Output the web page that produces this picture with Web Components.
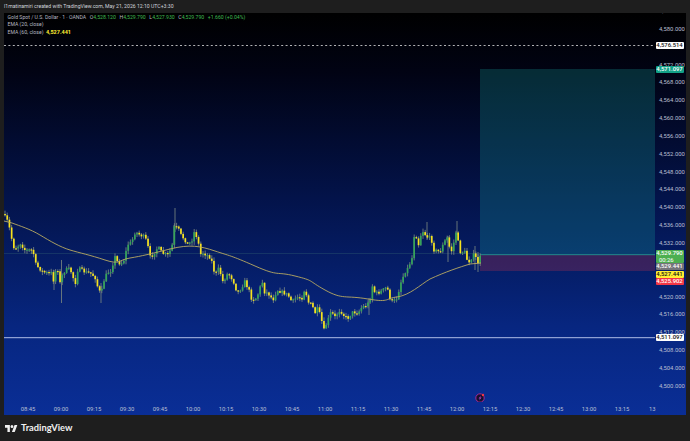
<!DOCTYPE html>
<html lang="en"><head><meta charset="utf-8"><title>TradingView snapshot</title>
<style>html,body{margin:0;padding:0;background:#1e1e1e}</style></head>
<body>
<tv-snapshot>
  <tv-title slot="title">l1matinamiri created with TradingView.com, May 21, 2026 12:10 UTC+3:30</tv-title>
  <tv-panel slot="panel">
    <tv-legend slot="legend"></tv-legend>
    <tv-plot slot="plot"></tv-plot>
    <tv-time-axis slot="time"></tv-time-axis>
    <tv-price-axis slot="price">
      <tv-tag y="42" bg="#ffffff" fg="#111">4,576.514</tv-tag>
      <tv-tag y="66" bg="#12a086" fg="#fff">4,571.097</tv-tag>
      <tv-tag y="250" h="13" bg="#4caf50" fg="#fff" sub="00:26">4,529.790</tv-tag>
      <tv-tag y="263" bg="#74747a" fg="#fff">4,529.441</tv-tag>
      <tv-tag y="270.5" bg="#ffee33" fg="#111">4,527.441</tv-tag>
      <tv-tag y="278" bg="#f23645" fg="#fff">4,525.902</tv-tag>
      <tv-tag y="334" bg="#ffffff" fg="#111">4,511.097</tv-tag>
    </tv-price-axis>
  </tv-panel>
  <tv-footer slot="footer">TradingView</tv-footer>
</tv-snapshot>
<script>
const FONT = '"Roboto","Liberation Sans",sans-serif';
function def(name, css, html, init){
  customElements.define(name, class extends HTMLElement{
    connectedCallback(){
      if(this.shadowRoot) return;
      const r=this.attachShadow({mode:'open'});
      r.innerHTML='<style>'+css+'</style>'+(typeof html==='function'?html(this):html);
      if(init) init(r,this);
    }
  });
}
def('tv-snapshot',`:host{display:grid;grid-template-rows:13px 402px 26px;width:690px;height:441px;background:#1e1e1e;overflow:hidden;font-family:${FONT}}`,
  '<slot name="title"></slot><slot name="panel"></slot><slot name="footer"></slot>');
def('tv-title',`:host{display:block;padding-left:4px;font:400 5.15px/12px ${FONT};color:#d1d4dc;white-space:nowrap}`,'<slot></slot>');
def('tv-panel',`:host{display:grid;grid-template-columns:651px 31px;grid-template-rows:389px 13px;margin-left:4px;width:682px;height:402px;position:relative;
  background:linear-gradient(180deg,#000 0%,#010314 15%,#03134a 46%,#072680 78%,#0a2e96 100%);overflow:hidden}
  ::slotted([slot=plot]){grid-column:1;grid-row:1}
  ::slotted([slot=time]){grid-column:1;grid-row:2}
  ::slotted([slot=price]){grid-column:2;grid-row:1/3}`,
  '<slot name="plot"></slot><slot name="time"></slot><slot name="price"></slot><slot name="legend"></slot>');
def('tv-legend',`:host{position:absolute;left:3.5px;top:1.2px;display:block;font:400 5.15px/7.3px ${FONT};color:#b6b9c2;white-space:nowrap;z-index:2}
  .r{display:flex;gap:3.6px} b{font-weight:400;color:#b6b9c2} .g{color:#3fb950}.v{display:inline-block} .y{color:#ffee33;font-weight:700;font-size:5.5px;margin-left:2.5px}`,
  `<div class="r"><span>Gold Spot / U.S. Dollar · 1 · OANDA</span>
   <span class="v"><b>O</b><span class="g">4,528.120</span></span>
   <span class="v"><b>H</b><span class="g">4,529.790</span></span>
   <span class="v"><b>L</b><span class="g">4,527.930</span></span>
   <span class="v"><b>C</b><span class="g">4,529.790</span></span>
   <span class="g">+1.660 (+0.04%)</span></div>
   <div>EMA (20, close)</div><div>EMA (60, close)<span class="y">4,527.441</span></div>`);
def('tv-plot',':host{display:block;width:651px;height:389px;position:relative;overflow:hidden} svg{display:block;position:absolute;left:0;top:0}',
 '<svg id="s" xmlns="http://www.w3.org/2000/svg" width="651" height="402" viewBox="4 13 651 402"></svg>',
 (r)=>{
  const pts=[[4,214],[5,217],[8,222],[11,235],[13,247],[17,248],[20,243],[23,247],[25,250],[30,250],[33,250],[35,263],[38,267],[43,272],[48,273],[52,273],[53,282],[57,265],[60,283],[63,273],[68,268],[72,273],[75,285],[78,268],[85,272],[90,273],[95,277],[97,285],[101,295],[103,283],[107,273],[112,270],[114,255],[118,263],[122,263],[125,258],[127,245],[132,242],[134,233],[137,233],[140,235],[145,237],[148,247],[150,257],[153,255],[158,247],[162,253],[168,255],[172,247],[174,227],[178,228],[181,235],[185,240],[188,245],[192,240],[194,232],[197,237],[201,255],[203,253],[207,255],[211,258],[215,275],[219,268],[223,282],[228,273],[233,280],[237,292],[242,288],[244,280],[249,290],[251,298],[255,300],[259,292],[262,280],[264,292],[268,293],[273,300],[277,290],[282,292],[288,295],[292,302],[297,297],[302,298],[305,288],[308,302],[312,305],[315,313],[318,308],[322,322],[324,330],[328,320],[331,312],[335,317],[340,310],[345,317],[348,318],[353,312],[358,313],[362,307],[367,305],[370,300],[372,285],[375,293],[378,293],[383,290],[387,287],[390,298],[393,302],[397,298],[401,282],[405,272],[408,268],[412,258],[415,228],[418,247],[422,230],[427,237],[431,238],[434,250],[440,252],[443,245],[447,237],[451,253],[454,242],[457,227],[459,252],[465,252],[468,263],[475,253],[477,265],[481,255]];
  const at=x=>{for(let i=1;i<pts.length;i++){if(x<=pts[i][0]){const a=pts[i-1],b=pts[i];return a[1]+(b[1]-a[1])*(x-a[0])/(b[0]-a[0]);}}return pts[pts.length-1][1];};
  let seed=7;const rnd=()=>(seed=(seed*16807)%2147483647)/2147483647;
  const UP='#35a45a',DN='#f7e21f',WK='#7f8a80';
  let s='<defs><filter id="b" x="-2%" y="-2%" width="104%" height="104%"><feGaussianBlur stdDeviation=".34"/></filter></defs>';
  s+='<rect x="480" y="69" width="175" height="186" fill="#18a49a" fill-opacity=".26"/>';
  s+='<rect x="480" y="255" width="175" height="16" fill="#f23645" fill-opacity=".22"/>';
  s+='<path d="M480 254.7H655" stroke="#2fa596" stroke-width=".9" opacity=".8"/>';
  s+='<path d="M4 253.5H480" stroke="#5ea583" stroke-width=".6" opacity=".3"/>';
  s+='<path d="M4 45.5H655" stroke="#e0e0e0" stroke-width=".8" stroke-dasharray="2 2.4"/>';
  s+='<path d="M4 337.7H655" stroke="#dbe2ff" stroke-width=".8"/>';
  let w='',b='';let prev=at(4);
  for(let x=5,i=0;x<=481;x+=2.2,i++){
    const c=at(x)+(rnd()-.5)*3.4;
    let top=Math.min(prev,c),bot=Math.max(prev,c);
    if(bot-top<1.2){bot=top+1.2}
    const wt=top-rnd()*3.2-.4,wb=bot+rnd()*3.2+.4;
    w+=`<path d="M${x.toFixed(1)} ${wt.toFixed(1)}V${wb.toFixed(1)}" stroke="${WK}" stroke-width=".8"/>`;
    b+=`<rect x="${(x-.85).toFixed(1)}" y="${top.toFixed(1)}" width="1.7" height="${(bot-top).toFixed(1)}" fill="${c<prev?UP:DN}"/>`;
    prev=c;
  }
  [[61.5,260,303],[101,283,303],[175,208,232],[427,222,240],[457,221,235],[475,246,270],[369,298,315],[54,270,290],[478,252,272],[174,225,245],[448,236,262]].forEach(a=>{
    w+=`<path d="M${a[0]} ${a[1]}V${a[2]}" stroke="${WK}" stroke-width=".8"/>`;});
  s+=`<g filter="url(#b)">${w}${b}</g>`;
  s+='<path d="M4 221L12 223C20 226 30 229 40 235S60 247 70 250 90 255 105 260 118 260 130 258 150 254 170 249 200 246 215 251 230 255 255 266 275 271 295 276 307 280 325 290 345 295 368 299 385 298 397 297C410 295 420 285 430 279 445 272 460 267 470 264L481 263" fill="none" stroke="#b8aa62" stroke-width="1" opacity=".9"/>';
  s+='<g><circle cx="480" cy="398" r="4.2" fill="#16102e" stroke="#a32a96" stroke-width="1"/><path d="M481 395.4L478.6 398.4H480L479 400.8L481.6 397.6H480.2Z" fill="#b23ad0"/><circle cx="483" cy="395" r="1.2" fill="#f23645"/></g>';
  r.getElementById('s').innerHTML=s;
 });
def('tv-time-axis',`:host{display:flex;height:13px;padding-left:7.5px;font:400 5.9px/14px ${FONT};color:#b8bfd2;white-space:nowrap;box-sizing:border-box;width:651px}
  span{flex:0 0 33px;text-align:center}`,
  ['08:45','09:00','09:15','09:30','09:45','10:00','10:15','10:30','10:45','11:00','11:15','11:30','11:45','12:00','12:15','12:30','12:45','13:00','13:15'].map(t=>`<span>${t}</span>`).join('')+'<span style="flex:0 0 6px;margin-left:10.5px">13</span>');
def('tv-price-axis',`:host{display:block;position:relative;height:402px;overflow:hidden;font:400 5.9px/17.85px ${FONT};color:#b8bfd2}
  .t{margin-top:-10px;display:flex;flex-direction:column;padding-left:4px} .t span{flex:0 0 17.85px;height:17.85px;white-space:nowrap}`,
  ()=>{let h='<div class="t">';for(let p=584;p>=500;p-=4){const hid=(p===576||p===528||p===524);h+=hid?'<span></span>':`<span>4,${p}.000</span>`;}return h+'</div><slot></slot>';});
def('tv-tag',`:host{position:absolute;left:.5px;width:28px;display:block;border-radius:1px;text-align:center;font:500 5.9px/7px ${FONT};white-space:nowrap}
  .s{display:block;font-weight:400;line-height:6px;text-align:left;padding-left:3.5px}`,
  (h)=>'<slot></slot>'+(h.getAttribute('sub')?`<span class="s">${h.getAttribute('sub')}</span>`:''),
  (r,h)=>{h.style.top=(parseFloat(h.getAttribute('y'))-13)+'px';h.style.height=(h.getAttribute('h')||7)+'px';h.style.background=h.getAttribute('bg');h.style.color=h.getAttribute('fg');});
def('tv-footer',`:host{display:flex;align-items:center;gap:3.5px;padding:0 0 0 5px;height:26px;box-sizing:border-box;font:700 9.3px/1 "Lato","Liberation Sans",sans-serif;color:#f0f0f0}
  svg{display:block;flex:none}`,
  '<svg xmlns="http://www.w3.org/2000/svg" width="12.5" height="7" viewBox="0 4 36 18" preserveAspectRatio="none"><path fill="#f0f0f0" d="M14 22H7V11H0V4h14v18zM28 22h-8l7.5-18h8L28 22z"/><circle fill="#f0f0f0" cx="20" cy="8" r="4"/></svg><slot></slot>');
</script>
</body></html>
